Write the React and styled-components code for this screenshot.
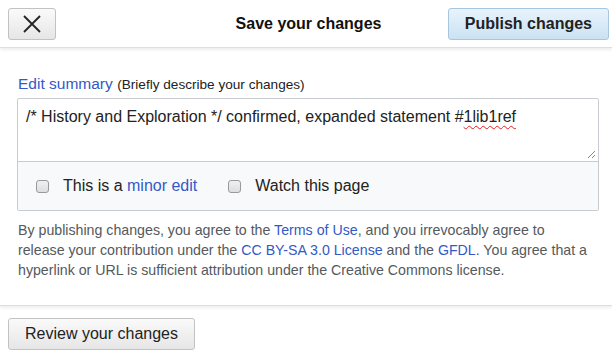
import React from 'react';
import styled, { createGlobalStyle } from 'styled-components';

// --- Global ---
const GlobalStyle = createGlobalStyle`
  body {
    margin: 0;
    background: #ffffff;
    font-family: "Liberation Sans", Arial, sans-serif;
    color: #222222;
  }
`;

// --- Header ---
const Header = styled.header`
  display: grid;
  grid-template-columns: 1fr auto 1fr;
  align-items: center;
  height: 48px;
  padding: 0 3px 0 8px;
  box-sizing: border-box;
  background: #ffffff;
  border-bottom: 1px solid #dcdee2;
  box-shadow: 0 2px 3px rgba(0, 0, 0, 0.07);
  position: relative;
  z-index: 1;
`;

const Title = styled.h1`
  margin: 0;
  font-size: 16px;
  font-weight: 700;
  color: #111111;
`;

const Button = styled.button`
  font-family: "Liberation Sans", Arial, sans-serif;
  font-size: 16px;
  font-weight: ${(p) => (p.$primary ? 700 : 400)};
  color: #222222;
  height: 32px;
  padding: 0 ${(p) => (p.$icon ? 0 : 16)}px;
  width: ${(p) => (p.$icon ? '48px' : 'auto')};
  border-radius: 3px;
  border: 1px solid ${(p) => (p.$primary ? '#a7c7e0' : '#c2c2c2')};
  background: ${(p) =>
    p.$primary
      ? 'linear-gradient(#e8f3fc, #cbe2f3)'
      : 'linear-gradient(#fafafa, #e6e6e6)'};
  display: inline-flex;
  align-items: center;
  justify-content: center;
  justify-self: ${(p) => p.$align || 'start'};
  cursor: pointer;
`;

// --- Panel ---
const Panel = styled.main`
  padding: 26px 13px 25px 17px;
  border-bottom: 1px solid #dcdee2;
  box-shadow: 0 2px 3px rgba(0, 0, 0, 0.07);
`;

const Label = styled.div`
  padding-left: 1px;
  margin-bottom: 3px;
  line-height: 20px;
  white-space: nowrap;
`;

const Link = styled.a`
  color: #3359c7;
  text-decoration: none;
  font-size: ${(p) => p.$size || 'inherit'};
`;

const Hint = styled.span`
  font-size: 13.6px;
  color: #222222;
`;

const SummaryBox = styled.div`
  border: 1px solid #c8ccd1;
  border-radius: 2px;
  overflow: hidden;
`;

const SummaryText = styled.div`
  position: relative;
  height: 62px;
  box-sizing: border-box;
  padding: 8px;
  font-size: 16px;
  line-height: 20px;
  color: #222222;
  background: #ffffff;
`;

const Misspelled = styled.span`
  text-decoration: underline wavy #e02020;
  text-decoration-thickness: 1px;
  text-underline-offset: 3px;
`;

const Grip = styled.svg`
  position: absolute;
  right: 2px;
  bottom: 2px;
`;

const Options = styled.div`
  display: flex;
  align-items: center;
  height: 49px;
  box-sizing: border-box;
  padding: 0 0 0 18px;
  border-top: 1px solid #c8ccd1;
  background: #f8f9fa;
  gap: 31px;
`;

const Option = styled.label`
  display: flex;
  align-items: center;
  gap: 14px;
  font-size: 16px;
  color: #222222;
`;

const Check = styled.span`
  width: 13px;
  height: 13px;
  box-sizing: border-box;
  border: 1px solid #9a9a9a;
  border-radius: 3px;
  background: linear-gradient(#f0f0f0, #dedede);
`;

const Legal = styled.p`
  margin: 9px 7px 0 1px;
  font-size: 14.2px;
  line-height: 20px;
  color: #54595d;
`;

// --- Footer ---
const Footer = styled.footer`
  padding: 12px 8px;
`;

const CloseIcon = () => (
  <svg width="20" height="18" viewBox="0 0 20 18">
    <path d="M2 1 L18 17 M18 1 L2 17" stroke="#222" strokeWidth="1.8" fill="none" />
  </svg>
);

function App() {
  return (
    <>
      <GlobalStyle />
      <Header>
        <Button $icon aria-label="Close">
          <CloseIcon />
        </Button>
        <Title>Save your changes</Title>
        <Button $primary $align="end">Publish changes</Button>
      </Header>

      <Panel>
        <Label>
          <Link $size="15.5px">Edit summary</Link> <Hint>(Briefly describe your changes)</Hint>
        </Label>
        <SummaryBox>
          <SummaryText>
            /* History and Exploration */ confirmed, expanded statement #<Misspelled>1lib1ref</Misspelled>
            <Grip width="9" height="9" viewBox="0 0 9 9">
              <path d="M1 8 L8 1 M5 8 L8 5" stroke="#888" strokeWidth="1" fill="none" />
            </Grip>
          </SummaryText>
          <Options>
            <Option>
              <Check />
              <span>
                This is a <Link>minor edit</Link>
              </span>
            </Option>
            <Option>
              <Check />
              <span>Watch this page</span>
            </Option>
          </Options>
        </SummaryBox>
        <Legal>
          By publishing changes, you agree to the <Link>Terms of Use</Link>, and you irrevocably agree to
          release your contribution under the <Link>CC BY-SA 3.0 License</Link> and the <Link>GFDL</Link>. You
          agree that a hyperlink or URL is sufficient attribution under the Creative Commons license.
        </Legal>
      </Panel>

      <Footer>
        <Button>Review your changes</Button>
      </Footer>
    </>
  );
}

export default App;
